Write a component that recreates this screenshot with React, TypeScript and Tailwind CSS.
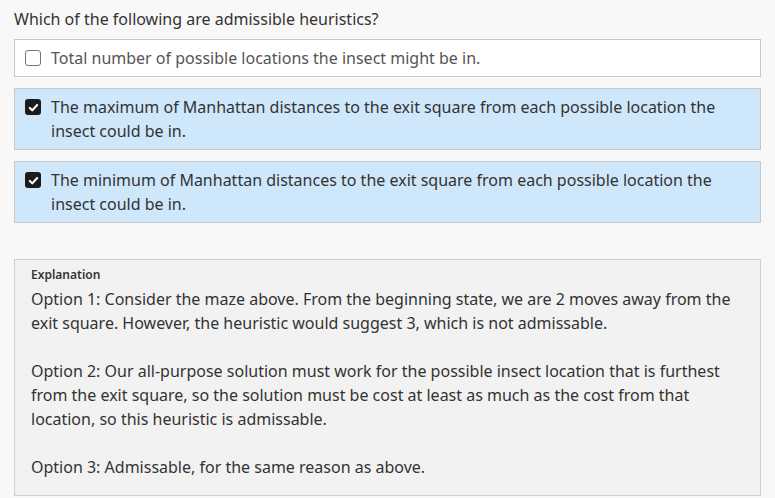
const options = [
  { text: "Total number of possible locations the insect might be in.", checked: false },
  {
    text: "The maximum of Manhattan distances to the exit square from each possible location the insect could be in.",
    checked: true,
  },
  {
    text: "The minimum of Manhattan distances to the exit square from each possible location the insect could be in.",
    checked: true,
  },
];

const Box = ({ checked }: { checked: boolean }) =>
  checked ? (
    <span className="mt-1 flex h-4 w-4 shrink-0 items-center justify-center rounded-[3px] bg-[#1b1b1b]">
      <svg viewBox="0 0 16 16" className="h-[13px] w-[13px]" fill="none" stroke="white" strokeWidth="2.6" strokeLinecap="round" strokeLinejoin="round">
        <path d="M3.5 8.5l3 3 6-6.5" />
      </svg>
    </span>
  ) : (
    <span className="mt-1 h-4 w-4 shrink-0 rounded-[3px] border-[1.5px] border-[#767676] bg-white" />
  );

export default function App() {
  return (
    <div className="min-h-[498px] bg-[#f8f8f8] px-[14px] pt-[7px] font-['Noto_Sans',sans-serif] text-base leading-6 text-[#333]">
      <p className="mb-2">Which of the following are admissible heuristics?</p>
      <div className="flex flex-col gap-[11px]">
        {options.map((o) => (
          <label
            key={o.text}
            className={
              o.checked
                ? "flex gap-[10px] border border-[#c8c8c8] bg-[#cfe7fb] py-[6px] pl-[10px] pr-8 text-[#333]"
                : "flex gap-[10px] border border-[#c8c8c8] bg-white py-[6px] pl-[10px] pr-8 text-[#555]"
            }
          >
            <Box checked={o.checked} />
            <span>{o.text}</span>
          </label>
        ))}
      </div>
      <div className="mt-[36px] border border-[#cfcfcf] bg-[#f2f2f2] px-4 pb-4 pt-[7px]">
        <p className="mb-1 text-xs font-semibold leading-4 text-[#333]">Explanation</p>
        <p>
          Option 1: Consider the maze above. From the beginning state, we are 2 moves away from the exit square. However, the
          heuristic would suggest 3, which is not admissable.
        </p>
        <p className="mt-6">
          Option 2: Our all-purpose solution must work for the possible insect location that is furthest from the exit square, so
          the solution must be cost at least as much as the cost from that location, so this heuristic is admissable.
        </p>
        <p className="mt-6">Option 3: Admissable, for the same reason as above.</p>
      </div>
    </div>
  );
}
